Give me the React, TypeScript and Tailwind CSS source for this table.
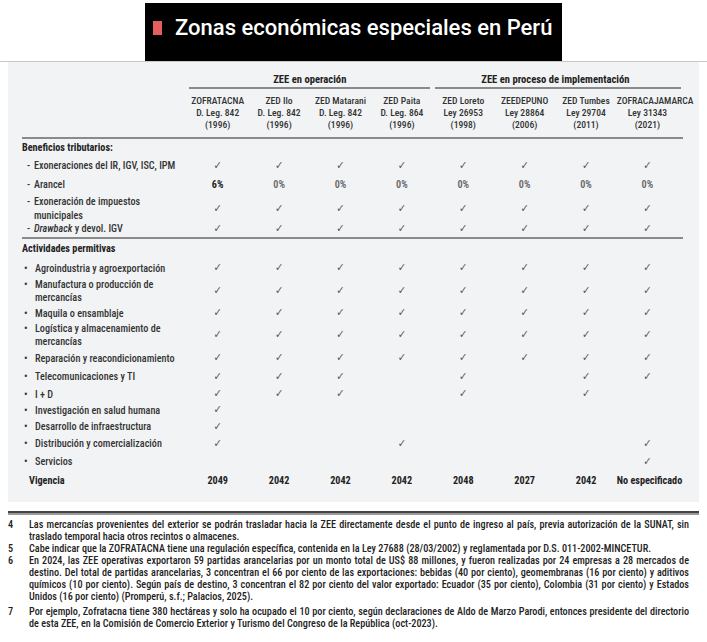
import React from "react";

const cond = "font-['Roboto',sans-serif] [font-stretch:75%]";

const zones = [
  ["ZOFRATACNA", "D. Leg. 842", "(1996)"],
  ["ZED Ilo", "D. Leg. 842", "(1996)"],
  ["ZED Matarani", "D. Leg. 842", "(1996)"],
  ["ZED Paita", "D. Leg. 864", "(1996)"],
  ["ZED Loreto", "Ley 26953", "(1998)"],
  ["ZEEDEPUNO", "Ley 28864", "(2006)"],
  ["ZED Tumbes", "Ley 29704", "(2011)"],
  ["ZOFRACAJAMARCA", "Ley 31343", "(2021)"],
];

const Check = () => <span className="font-['DejaVu_Sans'] text-[11px] text-[#555]">✓</span>;

function Row({ h, label, marks }: { h: string; label: React.ReactNode; marks: string }) {
  return (
    <div className={`grid grid-cols-[165px_repeat(8,61.4px)] items-center ${h}`}>
      <div>{label}</div>
      {marks.split("").map((m, i) => (
        <div key={i} className="text-center leading-none">
          {m === "1" ? <Check /> : null}
        </div>
      ))}
    </div>
  );
}

const Dash = ({ children }: { children: React.ReactNode }) => (
  <div className="flex pl-[5px] leading-[14px] whitespace-nowrap">
    <span className="w-[7px] shrink-0">-</span>
    <span>{children}</span>
  </div>
);

const Bullet = ({ children }: { children: React.ReactNode }) => (
  <div className="flex pl-[2px] leading-[13px] whitespace-nowrap">
    <span className="w-[11px] shrink-0">•</span>
    <span>{children}</span>
  </div>
);

const Line = ({ children, last }: { children: React.ReactNode; last?: boolean }) => (
  <div className={last ? "" : "whitespace-nowrap text-justify [text-align-last:justify]"}>{children}</div>
);

export default function App() {
  return (
    <div className="w-[707px] h-[642px] bg-white overflow-hidden">
      {/* title */}
      <div className="h-[3px]" />
      <div className="ml-[145px] w-[417px] h-[58px] bg-black flex items-center pl-[8px] pb-[8px]">
        <div className="w-[9px] h-[14px] bg-[#e5605c]" />
        <span className="ml-[13px] text-white text-[22px] font-medium font-['Roboto',sans-serif] leading-none">
          Zonas económicas especiales en Perú
        </span>
      </div>
      <div className="h-px bg-[#c8c8c8]" />

      {/* table panel */}
      <div className={`mx-[8px] h-[440px] bg-[#f2f3f5] pl-[14px] pr-[16px] text-[#333] text-[10.2px] font-medium ${cond}`}>
        <div className="grid grid-cols-[165px_245.6px_245.6px] h-[25px] pt-[12px] leading-[12px] text-[10.6px] font-bold text-[#222]">
          <div />
          <div className="text-center">ZEE en operación</div>
          <div className="text-center">ZEE en proceso de implementación</div>
        </div>
        <div className="grid grid-cols-[165px_245.6px_245.6px] h-[2px]">
          <div />
          <div className="ml-[2px] mr-[3px] bg-[#8a8a8a]" />
          <div className="ml-[2px] mr-[-3px] bg-[#8a8a8a]" />
        </div>
        <div className="grid grid-cols-[165px_repeat(8,61.4px)] h-[48px] pt-[6px] text-[9.6px] leading-[12px]">
          <div />
          {zones.map((z) => (
            <div key={z[0]} className="text-center whitespace-nowrap">
              {z.map((t) => (
                <div key={t}>{t}</div>
              ))}
            </div>
          ))}
        </div>
        <div className="h-[2px] bg-[#8a8a8a]" />

        <div className="h-[18px] flex items-center font-bold text-[#222]">Beneficios tributarios:</div>
        <Row h="h-[18px]" marks="11111111" label={<Dash>Exoneraciones del IR, IGV, ISC, IPM</Dash>} />
        <div className="grid grid-cols-[165px_repeat(8,61.4px)] items-center h-[20px]">
          <Dash>Arancel</Dash>
          <div className="text-center font-bold text-[#222]">6%</div>
          {[1, 2, 3, 4, 5, 6, 7].map((i) => (
            <div key={i} className="text-center font-semibold text-[#666]">0%</div>
          ))}
        </div>
        <Row
          h="h-[26px]"
          marks="11111111"
          label={
            <Dash>
              Exoneración de impuestos
              <br />
              municipales
            </Dash>
          }
        />
        <Row
          h="h-[16px]"
          marks="11111111"
          label={
            <Dash>
              <i>Drawback</i> y devol. IGV
            </Dash>
          }
        />
        <div className="h-[2px] bg-[#8a8a8a]" />

        <div className="h-[20px] flex items-center font-bold text-[#222]">Actividades permitivas</div>
        <Row h="h-[18px]" marks="11111111" label={<Bullet>Agroindustria y agroexportación</Bullet>} />
        <Row
          h="h-[28px]"
          marks="11111111"
          label={
            <Bullet>
              Manufactura o producción de
              <br />
              mercancías
            </Bullet>
          }
        />
        <Row h="h-[16px]" marks="11111111" label={<Bullet>Maquila o ensamblaje</Bullet>} />
        <Row
          h="h-[28px]"
          marks="11111111"
          label={
            <Bullet>
              Logística y almacenamiento de
              <br />
              mercancías
            </Bullet>
          }
        />
        <Row h="h-[18px]" marks="11111111" label={<Bullet>Reparación y reacondicionamiento</Bullet>} />
        <Row h="h-[19px]" marks="11101011" label={<Bullet>Telecomunicaciones y TI</Bullet>} />
        <Row h="h-[16px]" marks="11101010" label={<Bullet>I + D</Bullet>} />
        <Row h="h-[16px]" marks="10000000" label={<Bullet>Investigación en salud humana</Bullet>} />
        <Row h="h-[17px]" marks="10000000" label={<Bullet>Desarrollo de infraestructura</Bullet>} />
        <Row h="h-[17px]" marks="10010001" label={<Bullet>Distribución y comercialización</Bullet>} />
        <Row h="h-[19px]" marks="00000001" label={<Bullet>Servicios</Bullet>} />
        <div className="grid grid-cols-[165px_repeat(8,61.4px)] items-center h-[19px] font-bold text-[#222]">
          <div className="pl-[7px]">Vigencia</div>
          {["2049", "2042", "2042", "2042", "2048", "2027", "2042", "No especificado"].map((v, i) => (
            <div key={i} className="text-center whitespace-nowrap">{v}</div>
          ))}
        </div>
      </div>

      {/* footnotes */}
      <div className="mx-[8px] mt-[9px]">
        <div className="h-[2px] bg-[#444]" />
        <div className="h-[2px] bg-[#9a9a9a]" />
      </div>
      <div className={`mx-[8px] pr-[10px] pt-[4px] text-[10.2px] leading-[12px] font-medium text-[#222] ${cond}`}>
        <div className="grid grid-cols-[21px_1fr]">
          <span>4</span>
          <div>
            <Line>
              Las mercancías provenientes del exterior se podrán trasladar hacia la ZEE directamente desde el punto de ingreso al país, previa autorización de la SUNAT, sin
            </Line>
            <Line last>traslado temporal hacia otros recintos o almacenes.</Line>
          </div>
        </div>
        <div className="grid grid-cols-[21px_1fr]">
          <span>5</span>
          <Line last>
            Cabe indicar que la ZOFRATACNA tiene una regulación específica, contenida en la Ley 27688 (28/03/2002) y reglamentada por D.S. 011-2002-MINCETUR.
          </Line>
        </div>
        <div className="grid grid-cols-[21px_1fr]">
          <span>6</span>
          <div>
            <Line>
              En 2024, las ZEE operativas exportaron 59 partidas arancelarias por un monto total de US$ 88 millones, y fueron realizadas por 24 empresas a 28 mercados de
            </Line>
            <Line>
              destino. Del total de partidas arancelarias, 3 concentran el 66 por ciento de las exportaciones: bebidas (40 por ciento), geomembranas (16 por ciento) y aditivos
            </Line>
            <Line>
              químicos (10 por ciento). Según país de destino, 3 concentran el 82 por ciento del valor exportado: Ecuador (35 por ciento), Colombia (31 por ciento) y Estados
            </Line>
            <Line last>Unidos (16 por ciento) (Promperú, s.f.; Palacios, 2025).</Line>
          </div>
        </div>
        <div className="grid grid-cols-[21px_1fr] mt-[3px]">
          <span>7</span>
          <div>
            <Line>
              Por ejemplo, Zofratacna tiene 380 hectáreas y solo ha ocupado el 10 por ciento, según declaraciones de Aldo de Marzo Parodi, entonces presidente del directorio
            </Line>
            <Line last>de esta ZEE, en la Comisión de Comercio Exterior y Turismo del Congreso de la República (oct-2023).</Line>
          </div>
        </div>
      </div>
    </div>
  );
}
